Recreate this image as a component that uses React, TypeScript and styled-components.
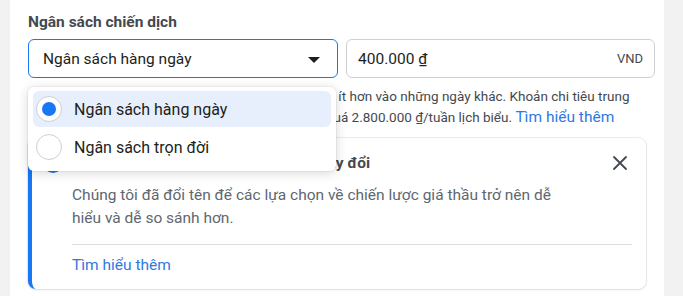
import React from "react";
import styled, { createGlobalStyle } from "styled-components";

const Global = createGlobalStyle`
  html, body { margin: 0; padding: 0; }
  body {
    background: #f2f2f2;
    font-family: Roboto, "Liberation Sans", Arial, sans-serif;
    -webkit-font-smoothing: antialiased;
  }
`;

const Page = styled.div`
  display: flex;
  height: 296px;
  overflow: hidden;
  padding-left: 10px;
`;

const Panel = styled.section`
  width: 654px;
  background: #ffffff;
  padding: 12px 18px 0 18px;
  box-sizing: border-box;
`;

const Heading = styled.h3`
  margin: 0;
  font-size: 15.5px;
  line-height: 20px;
  font-weight: 700;
  color: #444950;
`;

const FieldRow = styled.div`
  display: grid;
  grid-template-columns: 310px 309px;
  gap: 8px;
  margin-top: 7px;
`;

const SelectWrap = styled.div`
  position: relative;
`;

const SelectBox = styled.div`
  height: 39px;
  box-sizing: border-box;
  border: 1px solid #1877f2;
  border-radius: 6px;
  display: flex;
  align-items: center;
  justify-content: space-between;
  padding: 0 14px 0 14px;
  font-size: 15.5px;
  color: #1c1e21;
`;

const Caret = styled.span`
  width: 0;
  height: 0;
  border-left: 6px solid transparent;
  border-right: 6px solid transparent;
  border-top: 6px solid #1c1e21;
  margin-right: 3px;
  margin-top: 2px;
`;

const InputBox = styled.div`
  height: 39px;
  box-sizing: border-box;
  border: 1px solid #ccd0d5;
  border-radius: 6px;
  display: flex;
  align-items: center;
  justify-content: space-between;
  padding: 0 11px;
  font-size: 15.5px;
  color: #1c1e21;
`;

const Currency = styled.span`
  font-size: 13px;
  color: #444950;
`;

const Menu = styled.ul`
  position: absolute;
  top: 48px;
  left: 0;
  width: 308px;
  box-sizing: border-box;
  margin: 0;
  padding: 4px 5px;
  list-style: none;
  background: #ffffff;
  border-radius: 6px;
  box-shadow: 0 2px 12px rgba(0, 0, 0, 0.16), 0 0 0 1px rgba(0, 0, 0, 0.04);
  z-index: 5;
`;

const MenuItem = styled.li<{ $active?: boolean }>`
  display: flex;
  align-items: center;
  gap: 12px;
  height: 36px;
  padding: 0 3px;
  margin-bottom: 2px;
  border-radius: 6px;
  background: ${(p) => (p.$active ? "#e7effc" : "transparent")};
  font-size: 16px;
  color: #1c1e21;
`;

const Radio = styled.span<{ $checked?: boolean }>`
  width: 26px;
  height: 26px;
  box-sizing: border-box;
  border-radius: 50%;
  border: 1px solid #ccd0d5;
  background: #ffffff;
  display: flex;
  align-items: center;
  justify-content: center;
  flex-shrink: 0;
  &::after {
    content: "";
    width: 14px;
    height: 14px;
    border-radius: 50%;
    background: ${(p) => (p.$checked ? "#1877f2" : "transparent")};
  }
`;

const Help = styled.p`
  margin: 8px 0 0 0;
  font-size: 13.5px;
  line-height: 21px;
  color: #444950;
  width: 620px;
  white-space: nowrap;
`;

const Link = styled.a`
  color: #2f78e4;
  font-size: 15.5px;
  text-decoration: none;
`;

const Card = styled.div`
  margin-top: 10px;
  width: 618px;
  box-sizing: border-box;
  border-left: 4px solid #1877f2;
  border-radius: 8px;
  background: #ffffff;
  box-shadow: 0 0 0 1px rgba(0, 0, 0, 0.07), 0 1px 3px rgba(0, 0, 0, 0.08);
  display: grid;
  grid-template-columns: 40px 1fr;
  padding: 13px 14px 14px 0;
`;

const IconCell = styled.div`
  display: flex;
  justify-content: center;
  padding-left: 2px;
  padding-top: 2px;
`;

const InfoDot = styled.span`
  width: 20px;
  height: 20px;
  border-radius: 50%;
  background: #1877f2;
  color: #fff;
  font-size: 13px;
  font-weight: 700;
  line-height: 20px;
  text-align: center;
`;

const CardBody = styled.div`
  display: flex;
  flex-direction: column;
`;

const CardHeader = styled.div`
  display: flex;
  align-items: center;
  justify-content: space-between;
`;

const CardTitle = styled.div`
  font-size: 15.5px;
  font-weight: 700;
  line-height: 24px;
  color: #444950;
`;

const CardText = styled.p`
  margin: 9px 0 0 0;
  font-size: 15.5px;
  line-height: 23px;
  color: #606770;
  max-width: 495px;
`;

const Divider = styled.hr`
  border: none;
  border-top: 1px solid #dadde1;
  margin: 14px 0 0 0;
`;

const CardLink = styled(Link)`
  margin-top: 10px;
  line-height: 20px;
`;

const Close = styled.button`
  border: none;
  background: none;
  padding: 0;
  width: 24px;
  height: 24px;
  display: flex;
  align-items: center;
  justify-content: center;
  cursor: pointer;
`;

export default function App() {
  return (
    <>
      <Global />
      <Page>
        <Panel>
          <Heading>Ngân sách chiến dịch</Heading>
          <FieldRow>
            <SelectWrap>
              <SelectBox>
                <span>Ngân sách hàng ngày</span>
                <Caret />
              </SelectBox>
              <Menu>
                <MenuItem $active>
                  <Radio $checked />
                  Ngân sách hàng ngày
                </MenuItem>
                <MenuItem>
                  <Radio />
                  Ngân sách trọn đời
                </MenuItem>
              </Menu>
            </SelectWrap>
            <InputBox>
              <span>400.000 ₫</span>
              <Currency>VND</Currency>
            </InputBox>
          </FieldRow>
          <Help>
            Bạn sẽ chi tiêu nhiều tiền hơn trong một vài ngày và ít hơn vào những ngày khác. Khoản chi tiêu trung
            <br />
            bình mỗi tuần của chiến dịch sẽ không được vượt quá 2.800.000 ₫/tuần lịch biểu.{" "}
            <Link href="#">Tìm hiểu thêm</Link>
          </Help>
          <Card>
            <IconCell>
              <InfoDot>i</InfoDot>
            </IconCell>
            <CardBody>
              <CardHeader>
                <CardTitle>Tên gọi các chiến lược giá thầu đã thay đổi</CardTitle>
                <Close aria-label="Đóng">
                  <svg width="16" height="16" viewBox="0 0 16 16">
                    <path d="M2 2 L14 14 M14 2 L2 14" stroke="#444950" strokeWidth="1.8" strokeLinecap="round" />
                  </svg>
                </Close>
              </CardHeader>
              <CardText>
                Chúng tôi đã đổi tên để các lựa chọn về chiến lược giá thầu trở nên dễ hiểu và dễ so sánh hơn.
              </CardText>
              <Divider />
              <CardLink href="#">Tìm hiểu thêm</CardLink>
            </CardBody>
          </Card>
        </Panel>
      </Page>
    </>
  );
}
